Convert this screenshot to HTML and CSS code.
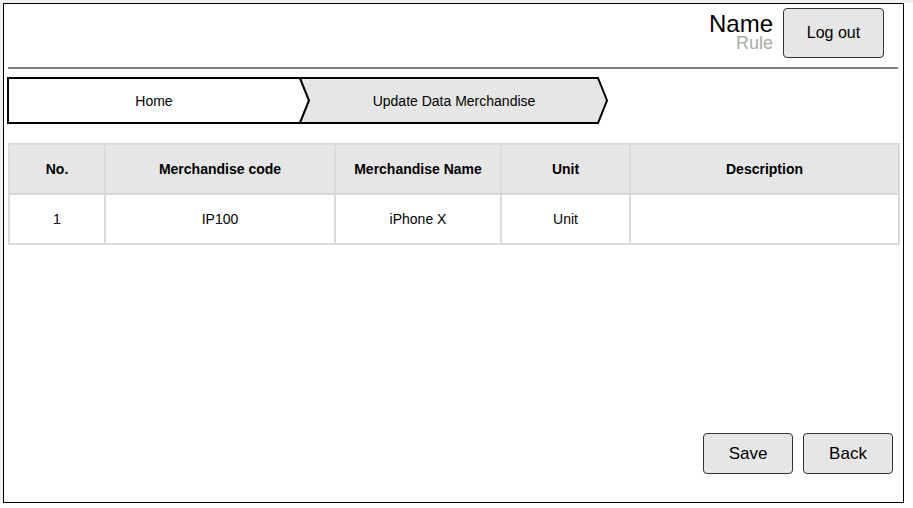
FILE: index.html
```html
<!DOCTYPE html>
<html>
<head>
<meta charset="utf-8">
<link rel="stylesheet" href="styles.css">
</head>
<body>
<div class="frame">
  <header class="topbar">
    <div class="user">
      <div class="user-name">Name</div>
      <div class="user-rule">Rule</div>
    </div>
    <button class="btn btn-logout">Log out</button>
  </header>
  <div class="separator"></div>
  <nav class="crumbs">
    <svg class="crumbs-bg" width="612" height="50" viewBox="0 0 612 50">
      <polygon points="4,2 296,2 305,24.5 296,47 4,47" fill="#ffffff" stroke="#000" stroke-width="2" stroke-linejoin="miter"/>
      <polygon points="296,2 594,2 603,24.5 594,47 296,47 305,24.5" fill="#e6e6e6" stroke="#000" stroke-width="2" stroke-linejoin="miter"/>
    </svg>
    <span class="crumb crumb-home">Home</span>
    <span class="crumb crumb-current">Update Data Merchandise</span>
  </nav>
  <table class="grid">
    <colgroup>
      <col class="c1"><col class="c2"><col class="c3"><col class="c4"><col class="c5">
    </colgroup>
    <thead>
      <tr><th>No.</th><th>Merchandise code</th><th>Merchandise Name</th><th>Unit</th><th>Description</th></tr>
    </thead>
    <tbody>
      <tr><td>1</td><td>IP100</td><td>iPhone X</td><td>Unit</td><td></td></tr>
    </tbody>
  </table>
  <div class="spacer"></div>
  <footer class="actions">
    <button class="btn btn-action">Save</button>
    <button class="btn btn-action">Back</button>
  </footer>
</div>
</body>
</html>
```

FILE: styles.css
```css
html, body {
  margin: 0;
  padding: 0;
  background: #ffffff;
}
body {
  border-top: 3px solid #f0f0f0;
  border-left: 3px solid #f0f0f0;
  font-family: "Liberation Sans", Arial, sans-serif;
  color: #000;
}
.frame {
  box-sizing: border-box;
  width: 901px;
  height: 500px;
  border: 1px solid #000;
  background: #fff;
  display: flex;
  flex-direction: column;
}
.topbar {
  display: flex;
  justify-content: flex-end;
  align-items: flex-start;
  padding: 4px 19px 0 0;
  height: 50px;
  gap: 10px;
}
.user {
  display: flex;
  flex-direction: column;
  align-items: flex-end;
  padding-top: 5px;
}
.user-name {
  font-size: 24px;
  line-height: 21px;
}
.user-rule {
  font-size: 18px;
  line-height: 18px;
  color: #aaaaaa;
}
.btn {
  box-sizing: border-box;
  font-family: "Liberation Sans", Arial, sans-serif;
  background: #e6e6e6;
  border: 1px solid #333;
  border-radius: 4px;
  color: #000;
  padding: 0;
}
.btn-logout {
  width: 101px;
  height: 50px;
  font-size: 16px;
}
.separator {
  height: 2px;
  background: #808080;
  margin: 9px 5px 0 4px;
}
.crumbs {
  position: relative;
  height: 50px;
  margin-top: 7px;
  display: flex;
  align-items: center;
  font-size: 14px;
}
.crumbs-bg {
  position: absolute;
  left: 0;
  top: 0;
}
.crumb {
  position: relative;
  text-align: center;
}
.crumb-home {
  width: 300px;
}
.crumb-current {
  width: 300px;
}
.grid {
  margin: 17px 0 0 4px;
  width: 890px;
  border-collapse: collapse;
  table-layout: fixed;
  font-size: 14px;
}
.c1 { width: 96px; }
.c2 { width: 230px; }
.c3 { width: 166px; }
.c4 { width: 129px; }
.c5 { width: 269px; }
.grid th, .grid td {
  border: 2px solid #dadada;
  height: 48px;
  padding: 0;
  text-align: center;
}
.grid th {
  background: #e6e6e6;
  font-weight: bold;
}
.spacer {
  flex: 1;
}
.actions {
  display: flex;
  justify-content: flex-end;
  gap: 10px;
  padding: 0 10px 28px 0;
}
.btn-action {
  width: 90px;
  height: 41px;
  font-size: 17px;
}
```
